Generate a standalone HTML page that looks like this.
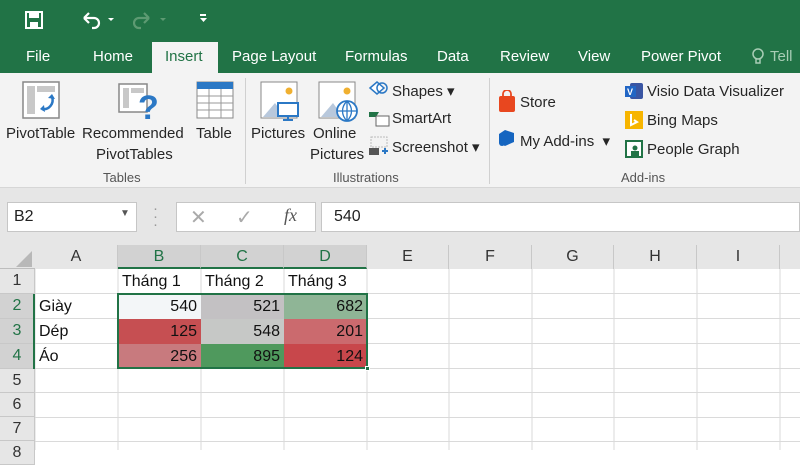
<!DOCTYPE html><html><head><style>
*{margin:0;padding:0;box-sizing:border-box}
body{width:800px;height:450px;overflow:hidden;background:#fff;font-family:"Liberation Sans","DejaVu Sans",sans-serif;position:relative}
.a{position:absolute;white-space:nowrap}
.tab{position:absolute;top:48px;color:#fff;font-size:15px}
.rb{font-size:15px;color:#262626}
.gl{font-size:13px;color:#555}
.ch{position:absolute;top:245px;height:24px;background:#e6e6e6;border-right:1px solid #c8c8c8;text-align:center;font-size:16px;line-height:24px;color:#333}
.rh{position:absolute;left:0;width:35px;background:#e6e6e6;border-bottom:1px solid #c8c8c8;text-align:center;font-size:16px;color:#333;border-right:1px solid #c8c8c8}
.c{position:absolute;font-size:16px;color:#111;line-height:25px;padding:0 4px}
</style></head><body>
<div class="a" style="left:0;top:0;width:800px;height:73px;background:#217346"></div>
<svg class="a" style="left:24px;top:10px" width="20" height="20" viewBox="0 0 20 20"><rect x="2" y="2" width="16" height="16" fill="none" stroke="#fff" stroke-width="2"/><rect x="5" y="2" width="10" height="6" fill="#fff"/><rect x="6" y="12" width="8" height="6" fill="#fff"/></svg>
<svg class="a" style="left:80px;top:10px" width="40" height="20" viewBox="0 0 40 20"><path d="M4 8 L9 3 M4 8 L9 13 M4 8 H14 A5 5 0 0 1 14 18 H12" fill="none" stroke="#fff" stroke-width="2.2"/><path d="M28 8 l6 0 l-3 3z" fill="#fff"/></svg>
<svg class="a" style="left:133px;top:10px" width="40" height="20" viewBox="0 0 40 20"><path d="M16 8 L11 3 M16 8 L11 13 M16 8 H6 A5 5 0 0 0 6 18 H8" fill="none" stroke="#5d9a72" stroke-width="2.2"/><path d="M27 8 l6 0 l-3 3z" fill="#5d9a72"/></svg>
<div class="a" style="left:200px;top:14px;width:6px;height:2px;background:#fff"></div>
<svg class="a" style="left:200px;top:18px" width="7" height="5"><path d="M0 0h7l-3.5 4z" fill="#fff"/></svg>
<div class="a" style="left:152px;top:42px;width:66px;height:32px;background:#f3f3f3"></div>
<div class="tab" style="left:26px">File</div>
<div class="tab" style="left:93px">Home</div>
<div class="tab" style="left:165px;color:#217346">Insert</div>
<div class="tab" style="left:232px">Page Layout</div>
<div class="tab" style="left:345px">Formulas</div>
<div class="tab" style="left:437px">Data</div>
<div class="tab" style="left:500px">Review</div>
<div class="tab" style="left:578px">View</div>
<div class="tab" style="left:641px">Power Pivot</div>
<svg class="a" style="left:752px;top:48px" width="12" height="18"><circle cx="6" cy="6" r="5" fill="none" stroke="#a8cdb5" stroke-width="1.5"/><path d="M4 11v4h4v-4" fill="none" stroke="#a8cdb5" stroke-width="1.5"/></svg>
<div class="tab" style="left:770px;color:#a8cdb5">Tell</div>
<div class="a" style="left:0;top:73px;width:800px;height:115px;background:#f3f3f3;border-bottom:1px solid #d6d6d6"></div>
<div class="a" style="left:0;top:188px;width:800px;height:57px;background:#e6e6e6"></div>
<div class="a" style="left:245px;top:78px;width:1px;height:106px;background:#d0d0d0"></div>
<div class="a" style="left:489px;top:78px;width:1px;height:106px;background:#d0d0d0"></div>
<svg class="a" style="left:22px;top:81px" width="38" height="38"><rect x="1" y="1" width="36" height="36" fill="#fff" stroke="#888" stroke-width="1.5"/><rect x="5" y="5" width="8" height="28" fill="#c8c8c8"/><rect x="15" y="5" width="18" height="6" fill="#c8c8c8"/><path d="M30 16 A9 9 0 0 1 20 28" fill="none" stroke="#2b78c5" stroke-width="2.5"/><path d="M26 17l4-4 3 5zM22 24l-4 4 5 3z" fill="#2b78c5"/></svg>
<svg class="a" style="left:118px;top:81px" width="40" height="40"><rect x="1" y="3" width="28" height="28" fill="#fff" stroke="#888" stroke-width="1.5"/><rect x="5" y="7" width="6" height="20" fill="#c8c8c8"/><rect x="13" y="7" width="13" height="5" fill="#c8c8c8"/><text x="20" y="38" font-size="34" font-weight="bold" fill="#2b78c5" font-family="Liberation Sans">?</text></svg>
<svg class="a" style="left:196px;top:81px" width="38" height="38"><rect x="1" y="1" width="36" height="36" fill="#fff" stroke="#888"/><rect x="1" y="1" width="36" height="7" fill="#2b78c5"/><path d="M1 15h36M1 22h36M1 29h36M13 8v29M25 8v29" stroke="#999"/></svg>
<svg class="a" style="left:260px;top:81px" width="40" height="40"><rect x="1" y="1" width="36" height="36" fill="#fff" stroke="#888"/><circle cx="29" cy="10" r="3.5" fill="#f0b030"/><path d="M3 36L15 22 25 36z" fill="#b8c8dc"/><rect x="18" y="22" width="20" height="13" fill="#fff" stroke="#2b78c5" stroke-width="2"/><path d="M28 35v4M23 39h10" stroke="#2b78c5" stroke-width="2"/></svg>
<svg class="a" style="left:318px;top:81px" width="42" height="42"><rect x="1" y="1" width="36" height="36" fill="#fff" stroke="#888"/><circle cx="29" cy="10" r="3.5" fill="#f0b030"/><path d="M3 36L15 22 25 36z" fill="#b8c8dc"/><circle cx="29" cy="30" r="10" fill="#fff" stroke="#2b78c5" stroke-width="1.8"/><path d="M19 30h20M29 20v20M29 20c-6 6-6 14 0 20M29 20c6 6 6 14 0 20" fill="none" stroke="#2b78c5" stroke-width="1.3"/></svg>
<div class="a rb" style="left:6px;top:125px">PivotTable</div>
<div class="a rb" style="left:82px;top:125px">Recommended</div>
<div class="a rb" style="left:96px;top:146px">PivotTables</div>
<div class="a rb" style="left:196px;top:125px">Table</div>
<div class="a rb" style="left:251px;top:125px">Pictures</div>
<div class="a rb" style="left:313px;top:125px">Online</div>
<div class="a rb" style="left:310px;top:146px">Pictures</div>
<div class="a gl" style="left:103px;top:170px">Tables</div>
<div class="a gl" style="left:333px;top:170px">Illustrations</div>
<div class="a gl" style="left:621px;top:170px">Add-ins</div>
<svg class="a" style="left:368px;top:80px" width="22" height="20"><path d="M2 8l7-6 7 6-7 6z" fill="#fff" stroke="#2b78c5" stroke-width="1.5"/><circle cx="14" cy="8" r="5" fill="none" stroke="#2b78c5" stroke-width="1.5"/></svg>
<div class="a rb" style="left:392px;top:82px">Shapes ▾</div>
<svg class="a" style="left:368px;top:110px" width="22" height="18"><path d="M1 2h10l-3 5H1z" fill="#217346"/><rect x="8" y="6" width="13" height="10" fill="#fff" stroke="#666"/></svg>
<div class="a rb" style="left:392px;top:110px">SmartArt</div>
<svg class="a" style="left:368px;top:136px" width="22" height="20"><rect x="3" y="1" width="16" height="10" fill="none" stroke="#bbb" stroke-dasharray="2 1"/><rect x="1" y="12" width="10" height="7" fill="#555"/><path d="M14 15h6M17 12v6" stroke="#2b78c5" stroke-width="2"/></svg>
<div class="a rb" style="left:392px;top:138px">Screenshot ▾</div>
<svg class="a" style="left:498px;top:90px" width="18" height="22"><rect x="1" y="6" width="16" height="16" rx="2" fill="#e8471f"/><path d="M5 7V4a4 4 0 0 1 8 0v3" fill="none" stroke="#e8471f" stroke-width="1.8"/></svg>
<div class="a rb" style="left:520px;top:94px">Store</div>
<svg class="a" style="left:498px;top:129px" width="18" height="18"><path d="M7 1l9 3v9l-9 4-6-3V5z" fill="#1565c0"/><circle cx="4" cy="14" r="3" fill="#1565c0"/></svg>
<div class="a rb" style="left:520px;top:132px">My Add-ins &nbsp;▾</div>
<svg class="a" style="left:624px;top:82px" width="20" height="18"><rect x="6" y="1" width="13" height="16" rx="2" fill="#3955a3"/><rect x="1" y="4" width="11" height="11" fill="#2165c4"/><text x="3" y="13" font-size="9" fill="#fff" font-weight="bold">V</text></svg>
<div class="a rb" style="left:647px;top:83px">Visio Data Visualizer</div>
<svg class="a" style="left:625px;top:111px" width="18" height="18"><rect width="18" height="18" fill="#f7b500"/><path d="M6 3v11l6-3-3-2" fill="none" stroke="#fff" stroke-width="2"/></svg>
<div class="a rb" style="left:647px;top:112px">Bing Maps</div>
<svg class="a" style="left:625px;top:140px" width="18" height="18"><rect width="18" height="18" fill="#217346"/><rect x="2" y="2" width="14" height="14" fill="#fff"/><circle cx="10" cy="8" r="2.5" fill="#217346"/><rect x="6" y="11" width="8" height="5" fill="#217346"/></svg>
<div class="a rb" style="left:647px;top:141px">People Graph</div>
<div class="a" style="left:7px;top:202px;width:130px;height:30px;background:#fff;border:1px solid #c6c6c6"></div>
<div class="a" style="left:14px;top:208px;font-size:16px;color:#222">B2</div>
<div class="a" style="left:120px;top:208px;font-size:10px;color:#555">▼</div>
<div class="a" style="left:153px;top:205px;font-size:15px;color:#999;line-height:8px">·<br>·<br>·</div>
<div class="a" style="left:176px;top:202px;width:140px;height:30px;background:#fff;border:1px solid #c6c6c6"></div>
<div class="a" style="left:190px;top:205px;font-size:20px;color:#aaa">✕</div>
<div class="a" style="left:236px;top:205px;font-size:20px;color:#aaa">✓</div>
<div class="a" style="left:284px;top:205px;font-size:18px;color:#555;font-style:italic;font-family:'Liberation Serif',serif">fx</div>
<div class="a" style="left:321px;top:202px;width:479px;height:30px;background:#fff;border:1px solid #c6c6c6"></div>
<div class="a" style="left:334px;top:208px;font-size:16px;color:#222">540</div>
<div class="a" style="left:0;top:245px;width:800px;height:24px;background:#e6e6e6;border-bottom:1px solid #bdbdbd"></div>
<svg class="a" style="left:15px;top:250px" width="18" height="18"><path d="M17 1V17H1z" fill="#b8b8b8"/></svg>
<div class="ch" style="left:35px;width:83px">A</div>
<div class="ch" style="left:118px;width:83px;background:#d2d2d2;color:#217346;border-bottom:2px solid #217346">B</div>
<div class="ch" style="left:201px;width:83px;background:#d2d2d2;color:#217346;border-bottom:2px solid #217346">C</div>
<div class="ch" style="left:284px;width:83px;background:#d2d2d2;color:#217346;border-bottom:2px solid #217346">D</div>
<div class="ch" style="left:367px;width:82px">E</div>
<div class="ch" style="left:449px;width:83px">F</div>
<div class="ch" style="left:532px;width:82px">G</div>
<div class="ch" style="left:614px;width:83px">H</div>
<div class="ch" style="left:697px;width:83px">I</div>
<div class="ch" style="left:780px;width:30px"></div>
<svg class="a" style="left:0;top:269px" width="800" height="181">
<g stroke="#dadada" stroke-width="1">
<path d="M35 0V181M118 0V181M201 0V181M284 0V181M367 0V181M449 0V181M532 0V181M614 0V181M697 0V181M780 0V181"/>
<path d="M0 24.5H800M0 49.5H800M0 74.5H800M0 99.5H800M0 123.5H800M0 148.5H800M0 172.5H800"/>
</g></svg>
<div class="rh" style="top:269px;height:25px;line-height:24px">1</div>
<div class="rh" style="top:294px;height:25px;line-height:24px;background:#d2d2d2;color:#217346">2</div>
<div class="rh" style="top:319px;height:25px;line-height:24px;background:#d2d2d2;color:#217346">3</div>
<div class="rh" style="top:344px;height:25px;line-height:24px;background:#d2d2d2;color:#217346">4</div>
<div class="a" style="left:33px;top:294px;width:2px;height:75px;background:#217346"></div>
<div class="rh" style="top:369px;height:24px;line-height:23px">5</div>
<div class="rh" style="top:393px;height:24px;line-height:23px">6</div>
<div class="rh" style="top:417px;height:24px;line-height:23px">7</div>
<div class="rh" style="top:441px;height:24px;line-height:23px">8</div>
<div class="c" style="left:118px;top:269px">Tháng 1</div>
<div class="c" style="left:201px;top:269px">Tháng 2</div>
<div class="c" style="left:284px;top:269px">Tháng 3</div>
<div class="c" style="left:35px;top:294px">Giày</div>
<div class="c" style="left:35px;top:319px">Dép</div>
<div class="c" style="left:35px;top:344px">Áo</div>
<div class="c" style="left:118px;top:294px;width:83px;height:25px;text-align:right;background:#f3f6f8">540</div>
<div class="c" style="left:201px;top:294px;width:83px;height:25px;text-align:right;background:#c3c1c3">521</div>
<div class="c" style="left:284px;top:294px;width:83px;height:25px;text-align:right;background:#8fb596">682</div>
<div class="c" style="left:118px;top:319px;width:83px;height:25px;text-align:right;background:#c64f52">125</div>
<div class="c" style="left:201px;top:319px;width:83px;height:25px;text-align:right;background:#c6c8c6">548</div>
<div class="c" style="left:284px;top:319px;width:83px;height:25px;text-align:right;background:#cb6a6e">201</div>
<div class="c" style="left:118px;top:344px;width:83px;height:25px;text-align:right;background:#c87a7e">256</div>
<div class="c" style="left:201px;top:344px;width:83px;height:25px;text-align:right;background:#4f995d">895</div>
<div class="c" style="left:284px;top:344px;width:83px;height:25px;text-align:right;background:#c8474b">124</div>
<div class="a" style="left:117px;top:293px;width:251px;height:76px;border:2px solid #217346"></div>
<div class="a" style="left:365px;top:366px;width:5px;height:5px;background:#217346;border:1px solid #fff"></div>
</body></html>
